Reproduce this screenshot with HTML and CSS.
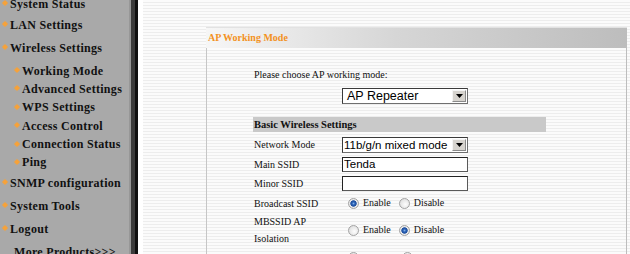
FILE: index.html
```html
<!DOCTYPE html>
<html>
<head>
<meta charset="utf-8">
<title>AP Working Mode</title>
<link rel="stylesheet" href="styles.css">
</head>
<body>
<div class="page">
    <div class="menu">
        <ul class="nav">
            <li class="first"><a href="#">System Status</a></li>
            <li><a href="#">LAN Settings</a></li>
            <li><a href="#">Wireless Settings</a>
                <ul class="sub">
                    <li><a href="#">Working Mode</a></li>
                    <li><a href="#">Advanced Settings</a></li>
                    <li><a href="#">WPS Settings</a></li>
                    <li><a href="#">Access Control</a></li>
                    <li><a href="#">Connection Status</a></li>
                    <li><a href="#">Ping</a></li>
                </ul>
            </li>
            <li><a href="#">SNMP configuration</a></li>
            <li><a href="#">System Tools</a></li>
            <li><a href="#">Logout</a></li>
        </ul>
        <a href="#" class="more">More Products&gt;&gt;&gt;</a>
    </div>
    <div class="divider"></div>
    <div class="main">
        <div class="panel">
            <div class="panel-title">AP Working Mode</div>
            <div class="panel-body">
                <p class="intro">Please choose AP working mode:</p>
                <div class="row row-mode">
                    <span></span>
                    <div class="select select-mode">
                        <span class="select-text">AP Repeater</span>
                        <span class="drop"><svg width="7" height="4" viewBox="0 0 7 4"><path d="M0 0h7L3.5 4z" fill="#000"/></svg></span>
                    </div>
                </div>

                <div class="bar">Basic Wireless Settings</div>

                <div class="fields">
                    <div class="row">
                        <label>Network Mode</label>
                        <div class="select">
                            <span class="select-text">11b/g/n mixed mode</span>
                            <span class="drop"><svg width="7" height="4" viewBox="0 0 7 4"><path d="M0 0h7L3.5 4z" fill="#000"/></svg></span>
                        </div>
                    </div>
                    <div class="row">
                        <label>Main SSID</label>
                        <input type="text" class="text" value="Tenda">
                    </div>
                    <div class="row">
                        <label>Minor SSID</label>
                        <input type="text" class="text" value="">
                    </div>
                    <div class="row">
                        <label>Broadcast SSID</label>
                        <div class="opts">
                            <label class="opt"><input type="radio" name="bc" checked>Enable</label>
                            <label class="opt"><input type="radio" name="bc">Disable</label>
                        </div>
                    </div>
                    <div class="row row-tall">
                        <label>MBSSID AP<br>Isolation</label>
                        <div class="opts">
                            <label class="opt"><input type="radio" name="mb">Enable</label>
                            <label class="opt"><input type="radio" name="mb" checked>Disable</label>
                        </div>
                    </div>
                    <div class="row row-last">
                        <label></label>
                        <div class="opts">
                            <label class="opt"><input type="radio" name="ap"></label>
                            <label class="opt"><input type="radio" name="ap" checked></label>
                        </div>
                    </div>
                </div>
            </div>
        </div>
    </div>
</div>
</body>
</html>
```

FILE: styles.css
```css
* {
    margin: 0;
    padding: 0;
    box-sizing: border-box;
}

body {
    width: 630px;
    height: 254px;
    overflow: hidden;
    font-family: "Liberation Serif", "Times New Roman", serif;
    font-size: 10px;
    color: #111;
}

.page {
    display: flex;
    height: 254px;
    overflow: hidden;
}

/* left menu */
.menu {
    flex: none;
    width: 129px;
    background: #a9a9a9;
}

.nav {
    list-style: none;
    margin-top: -5.5px;
}

.nav a,
.more {
    display: block;
    height: 23px;
    line-height: 23px;
    padding-left: 2px;
    font-size: 12px;
    font-weight: bold;
    letter-spacing: 0.3px;
    white-space: nowrap;
    color: #111;
    text-decoration: none;
}

.nav .first a {
    height: 19px;
    line-height: 19px;
}

.nav a::before {
    content: "";
    display: inline-block;
    width: 4px;
    height: 4px;
    margin: 0 3px 0 1px;
    vertical-align: 2.5px;
    background: #f6a23a;
    transform: rotate(45deg);
    box-shadow: 0 0 1px #f6a23a;
}

.sub {
    list-style: none;
    padding-top: 2px;
}

.sub a {
    height: 18.4px;
    line-height: 18.4px;
    padding-left: 14px;
}

.more {
    padding-left: 14px;
}

.divider {
    flex: none;
    width: 9px;
    background: linear-gradient(to right, #979797 0 2px, #3c3c3c 2px 6px, #111 6px 9px);
}

/* main area */
.main {
    flex: 1;
    border-left: 5px solid #fff;
    padding: 27px 3px 0 63px;
    background: repeating-linear-gradient(to bottom, #fbfbfb 0 2px, #ededed 2px 3px);
}

.panel-title {
    height: 21px;
    line-height: 20px;
    padding-left: 2px;
    border-top: 1px solid #e2e2e2;
    font-size: 10px;
    font-weight: bold;
    color: #f39223;
    background: linear-gradient(to right, #f6f6f6, #d6d6d6 45%, #bdbdbd);
}

.panel-body {
    height: 220px;
    padding-left: 46px;
    border-left: 1px solid #c6c6c6;
    border-right: 1px solid #bdbdbd;
}

.intro {
    padding: 20px 0 0 1px;
    line-height: 14px;
}

.row {
    display: grid;
    grid-template-columns: 89px auto;
    align-items: center;
    width: 293px;
    height: 19.5px;
}

.row > label {
    padding-left: 1px;
    line-height: 17px;
}

.row-mode {
    height: 16px;
    margin-top: 6px;
}

.row-tall {
    height: 34px;
}

.row-last {
    height: 20px;
}

.bar {
    width: 293px;
    height: 15px;
    margin-top: 13px;
    padding-left: 1px;
    line-height: 15px;
    font-size: 10.5px;
    font-weight: bold;
    background: #c9c9c9;
}

.fields {
    margin-top: 3px;
}

/* controls */
.select {
    display: flex;
    align-items: center;
    width: 126px;
    height: 16px;
    border: 1px solid #6f6f6f;
    border-top-color: #3a3a3a;
    border-left-color: #3a3a3a;
    background: #fff;
    font-family: "Liberation Sans", Arial, sans-serif;
    font-size: 11.5px;
    color: #000;
}

.select-text {
    flex: 1;
    padding-left: 1px;
    white-space: nowrap;
    overflow: hidden;
}

.select-mode {
    font-size: 12.5px;
}

.select-mode .select-text {
    padding-left: 4px;
}

.drop {
    display: flex;
    align-items: center;
    justify-content: center;
    width: 14px;
    height: 12px;
    margin-right: 1px;
    border: 1px solid #8a8a8a;
    border-top-color: #f4f4f4;
    border-left-color: #f4f4f4;
    background: #d6d3ce;
}

.text {
    width: 126px;
    height: 15px;
    padding: 0 0 0 1px;
    border: 1px solid #5a5a5a;
    border-top-color: #222;
    border-left-color: #222;
    font-family: "Liberation Sans", Arial, sans-serif;
    font-size: 11.5px;
    color: #000;
    background: #fff;
}

.opts {
    display: flex;
    align-items: center;
}

.opt {
    display: flex;
    align-items: center;
    line-height: 14px;
}

.opt + .opt {
    margin-left: 2px;
}

.row-last .opt + .opt {
    margin-left: 33px;
}

.opt input {
    appearance: none;
    -webkit-appearance: none;
    width: 11px;
    height: 11px;
    margin: 0 4px 0 6px;
    border: 1px solid #a3a3a3;
    border-radius: 50%;
    background: radial-gradient(circle at 60% 60%, #fdfdfd 0, #e6e6e6 60%, #cfcfcf 100%);
}

.opt input:checked {
    background: radial-gradient(circle, #7fb0ea 0, #2b62b5 1.5px, #1d4d9c 2.8px, #eeeeee 3.6px, #d8d8d8 100%);
}
```
